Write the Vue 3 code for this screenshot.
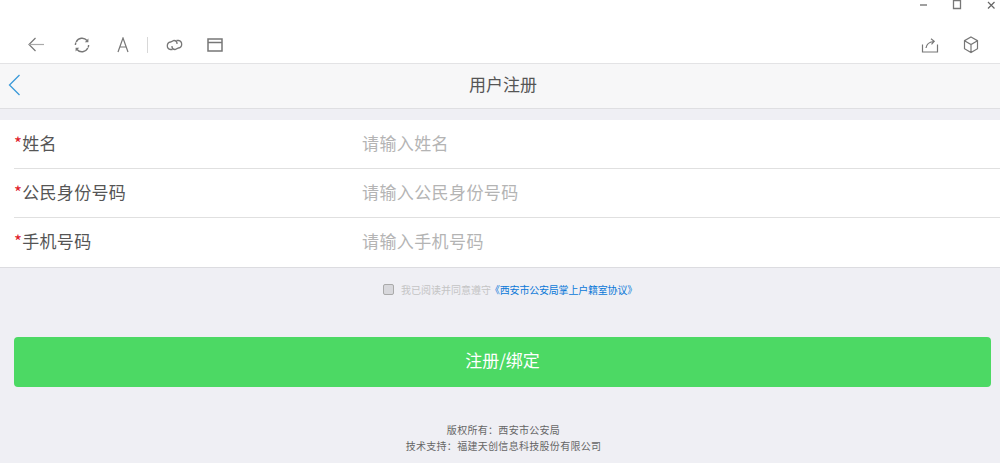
<template>
  <div class="page">
    <div class="titlebar">
      <svg width="12" height="12" viewBox="0 0 12 12"><path d="M2 5h7" stroke="#777" stroke-width="1.4" fill="none" /></svg>
      <svg class="win-max" width="12" height="12" viewBox="0 0 12 12"><path d="M2.500.5h7v8h-7z" stroke="#777" stroke-width="1.3" fill="none" /></svg>
      <svg width="12" height="12" viewBox="0 0 12 12"><path d="M2 2l6.500 6.500M8.500 2L2 8.500" stroke="#666" stroke-width="1.2" fill="none" /></svg>
    </div>
    <div class="toolbar">
      <div class="tools">
        <svg width="18" height="18" viewBox="0 0 18 18" class="ic-back"><path d="M8.500 2L2 8.500 8.500 15" stroke="#777" stroke-width="1.200" fill="none" /><path d="M2 8.500h15" stroke="#aaa" stroke-width="1.200" fill="none" /></svg>
        <svg width="18" height="18" viewBox="0 0 18 18" class="ic-refresh"><path d="M3.200 6A6.500 6.500 0 0 1 14 4.500M14.800 12A6.500 6.500 0 0 1 4 13.500M2.400 9a6.600 6.600 0 0 1 .5-2.600M15.600 9a6.600 6.600 0 0 1-.5 2.600" stroke="#777" stroke-width="1.400" fill="none" /><path d="M15.400 2.400v3.800h-3.600zM2.600 15.600v-3.800h3.600z" fill="#777" /></svg>
        <svg width="12" height="16" viewBox="0 0 12 16" class="ic-font"><path d="M1 15L6 1l5 14M2.800 10h6.400" stroke="#777" stroke-width="1.200" fill="none" /></svg>
        <span class="sep"></span>
        <svg width="17" height="12" viewBox="0 0 17 12" class="ic-link"><path d="M6.500 10.500H4.500A3.800 3.800 0 0 1 4.500 3L8 1.500a3 3 0 0 1 3 3.500M10.500 1.500h2a3.800 3.800 0 0 1 0 7.500L9 10.500A3 3 0 0 1 6 7" stroke="#777" stroke-width="1.300" fill="none" /></svg>
        <svg width="16" height="14" viewBox="0 0 16 14" class="ic-win"><path d="M1 1h14v12H1zM1 4.500h14" stroke="#777" stroke-width="1.500" fill="none" /></svg>
      </div>
      <div class="tools-right">
        <svg width="18" height="16" viewBox="0 0 18 16"><path d="M1.500 7.500V15h15V7.500M5 11c.5-3.500 3-6 7.500-6.500M10 1.800l3.200 2.600-2.700 3" stroke="#777" stroke-width="1.200" fill="none" /></svg>
        <svg width="16" height="18" viewBox="0 0 16 18"><path d="M8 1l6.500 3.700v8L8 16.500 1.500 12.700v-8zM1.500 4.700L8 8.500l6.500-3.800M8 8.500v8" stroke="#777" stroke-width="1.200" fill="none" /></svg>
      </div>
    </div>
    <header class="nav">
      <svg class="nav-back" width="13" height="22" viewBox="0 0 13 22"><path d="M11.500 1L1.500 11l10 10" stroke="#3b9ad9" stroke-width="1.300" fill="none" /></svg>
      <h1>用户注册</h1>
    </header>
    <div class="form">
      <div class="row" v-for="f in fields" :key="f.label">
        <label><i>*</i>{{ f.label }}</label>
        <span class="ph">{{ f.ph }}</span>
      </div>
    </div>
    <div class="agree">
      <span class="check"></span>
      <span>我已阅读并同意遵守</span><a>《西安市公安局掌上户籍室协议》</a>
    </div>
    <button class="submit">注册/绑定</button>
    <footer>
      <p>版权所有：西安市公安局</p>
      <p>技术支持：福建天创信息科技股份有限公司</p>
    </footer>
  </div>
</template>

<script setup>
const fields = [
  { label: '姓名', ph: '请输入姓名' },
  { label: '公民身份号码', ph: '请输入公民身份号码' },
  { label: '手机号码', ph: '请输入手机号码' }
]
</script>

<style>
html, body { margin: 0; background: #efeff4; }
</style>

<style scoped>
.page {
  width: 1000px;
  height: 463px;
  overflow: hidden;
  background: #efeff4;
  font-family: "Noto Sans CJK SC", "Liberation Sans", sans-serif;
}
.titlebar {
  height: 12px;
  background: #fff;
  display: flex;
  justify-content: flex-end;
  gap: 21px;
  padding-right: 2px;
}
.win-max { margin-right: 2px; }
.toolbar {
  box-sizing: border-box;
  height: 52px;
  background: #fff;
  border-bottom: 1px solid #e3e3e5;
  display: flex;
  justify-content: space-between;
  align-items: center;
  padding: 14px 21px 0 27px;
}
.tools, .tools-right { display: flex; align-items: center; }
.tools-right { gap: 24px; }
.ic-refresh { margin-left: 28px; }
.ic-font { margin-left: 26px; }
.sep { width: 1px; height: 16px; background: #d8d8d8; margin: 0 18px 0 18px; }
.ic-win { margin-left: 24px; }
.nav {
  box-sizing: border-box;
  height: 45px;
  background: #f7f7f8;
  border-bottom: 1px solid #dfdfe2;
  display: flex;
  align-items: center;
  justify-content: center;
  padding: 0 0 5px 6px;
  position: relative;
}
.nav-back { position: absolute; left: 8px; top: 10px; }
.nav h1 { margin: 0; font-size: 17px; font-weight: 400; color: #555; }
.form {
  margin-top: 11px;
  background: #fff;
  padding-left: 14px;
  border-bottom: 1px solid #dcdce0;
}
.row {
  box-sizing: border-box;
  height: 49px;
  padding-bottom: 4px;
  display: flex;
  align-items: center;
  border-bottom: 1px solid #e0e0e0;
}
.row:last-child { border-bottom: 0; }
label { width: 348px; font-size: 17px; color: #555; letter-spacing: .3px; }
label i { color: #e0202a; font-style: normal; }
.ph { font-size: 17px; color: #b4b4b4; letter-spacing: .4px; }
.agree {
  margin-top: 13px;
  height: 16px;
  display: flex;
  align-items: center;
  justify-content: center;
  font-size: 10px;
  color: #c4c4c4;
  padding-left: 20px;
}
.check {
  width: 9px;
  height: 9px;
  border: 1px solid #aaa;
  border-radius: 2px;
  background: #d8d8dc;
  margin-right: 7px;
}
.agree a { color: #0a78d8; margin-left: -1px; letter-spacing: -.2px; }
.submit {
  display: block;
  margin: 40px 9px 0 14px;
  width: 977px;
  height: 50px;
  padding: 0 0 5px;
  border: 0;
  border-radius: 4px;
  background: #4cd964;
  color: #fff;
  font-size: 17px;
  font-family: inherit;
}
footer { margin-top: 35px; text-align: center; font-size: 10px; color: #666; letter-spacing: .3px; padding-left: 7px; }
footer p { margin: 0; line-height: 16px; }
</style>
